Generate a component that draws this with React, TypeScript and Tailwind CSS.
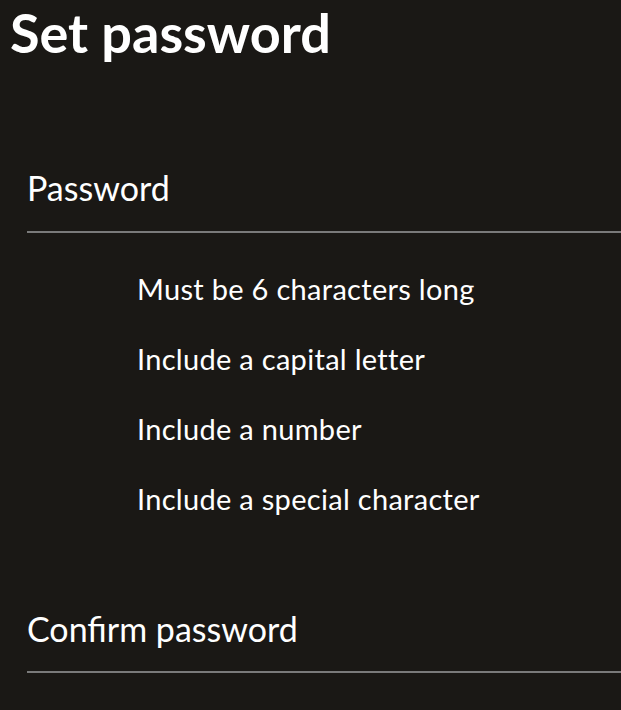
const rules = [
  'Must be 6 characters long',
  'Include a capital letter',
  'Include a number',
  'Include a special character',
];

function Field({ label, className = '' }: { label: string; className?: string }) {
  return (
    <div className={`text-[34px] leading-[40px] border-b-2 border-[#7a7a7a] ${className}`}>
      {label}
    </div>
  );
}

export default function App() {
  return (
    <div className="min-h-screen w-full overflow-hidden bg-[#1a1815] text-white font-['Lato',sans-serif]">
      <h1 className="pl-[10px] pt-[5px] text-[54px] font-bold leading-[56px]">Set password</h1>

      <form className="ml-[27px] mt-[107px]">
        <Field label="Password" className="pb-[23px]" />
        <ul className="mt-[21px] pl-[110px]">
          {rules.map((r) => (
            <li key={r} className="text-[29px] leading-[70px] tracking-[0.3px]">
              {r}
            </li>
          ))}
        </ul>
        <div className="mt-[75px]">
          <Field label="Confirm password" className="pb-[22px]" />
        </div>
      </form>
    </div>
  );
}
